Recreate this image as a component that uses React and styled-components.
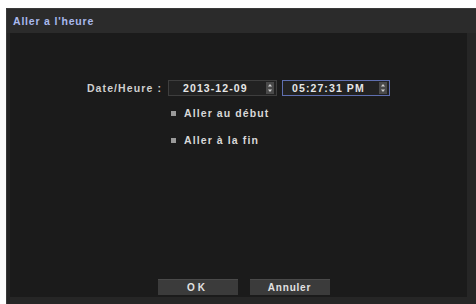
import React from "react";
import styled, { createGlobalStyle } from "styled-components";

const Global = createGlobalStyle`
  html, body {
    margin: 0;
    padding: 0;
    background: #ffffff;
    width: 476px;
    height: 304px;
    overflow: hidden;
  }
  body {
    font-family: "Liberation Sans", Arial, sans-serif;
  }
`;

const Page = styled.div`
  width: 476px;
  height: 304px;
  padding: 8px 0 0 6px;
  box-sizing: border-box;
  display: flex;
`;

const Dialog = styled.div`
  flex: 1;
  display: flex;
  flex-direction: column;
  background: #262626;
  border-left: 1px solid #3a3a3a;
  border-top: 1px solid #3a3a3a;
`;

const TitleBar = styled.div`
  height: 24px;
  display: flex;
  align-items: center;
  padding-left: 6px;
  background: #2b2b2b;
  color: #a9b9ee;
  font-size: 10.5px;
  font-weight: bold;
  letter-spacing: 0.8px;
`;

const Panel = styled.div`
  flex: 1;
  margin: 0 9px 7px 3px;
  background: #1b1b1b;
  display: flex;
  flex-direction: column;
  align-items: flex-start;
  padding-top: 47px;
  color: #dcdcdc;
  font-size: 10.5px;
  font-weight: bold;
  letter-spacing: 1.1px;
`;

const Row = styled.div`
  display: flex;
  align-items: center;
  height: 16px;
`;

const Label = styled.div`
  width: 158px;
  text-align: right;
  padding-right: 6px;
  box-sizing: border-box;
  color: #cfcfcf;
  white-space: nowrap;
`;

const Field = styled.div`
  width: ${p => p.w}px;
  height: 16px;
  box-sizing: border-box;
  display: flex;
  align-items: center;
  background: #222;
  border: 1px solid ${p => (p.active ? "#5f6fb0" : "#3e3e3e")};
  margin-right: 5px;
`;

const Value = styled.div`
  flex: 1;
  padding-left: ${p => p.pl}px;
  color: #e6e6e6;
  white-space: nowrap;
`;

const Spinner = styled.div`
  width: 8px;
  height: 12px;
  margin-right: 2px;
  background: #4a4a4a;
  display: flex;
  align-items: center;
  justify-content: center;
`;

const Option = styled.div`
  display: flex;
  align-items: center;
  height: 14px;
  margin-left: 161px;
  margin-top: ${p => p.mt}px;
  color: #d8d8d8;
`;

const Box = styled.span`
  width: 5px;
  height: 5px;
  background: #9a9a9a;
  margin-right: 8px;
`;

const Buttons = styled.div`
  margin-top: auto;
  margin-bottom: 2px;
  align-self: stretch;
  display: flex;
  justify-content: center;
  gap: 12px;
  padding-left: 10px;
`;

const Button = styled.div`
  width: 80px;
  height: 16px;
  background: #3b3b3b;
  border-top: 1px solid #4a4a4a;
  box-sizing: border-box;
  display: flex;
  align-items: center;
  justify-content: center;
  color: #e2e2e2;
  font-size: 10px;
  letter-spacing: ${p => (p.wide ? "3px" : "0.8px")};
`;

const SpinIcon = () => (
  <svg width="6" height="10" viewBox="0 0 6 10">
    <path d="M3 1 L5 3.5 H1 Z" fill="#d0d0d0" />
    <path d="M3 9 L5 6.5 H1 Z" fill="#d0d0d0" />
  </svg>
);

export default function App() {
  return (
    <>
      <Global />
      <Page>
        <Dialog>
          <TitleBar>Aller a l'heure</TitleBar>
          <Panel>
            <Row>
              <Label>Date/Heure :</Label>
              <Field w={109}>
                <Value pl={14}>2013-12-09</Value>
                <Spinner>
                  <SpinIcon />
                </Spinner>
              </Field>
              <Field w={108} active>
                <Value pl={9}>05:27:31 PM</Value>
                <Spinner>
                  <SpinIcon />
                </Spinner>
              </Field>
            </Row>
            <Option mt={10}>
              <Box />
              Aller au début
            </Option>
            <Option mt={13}>
              <Box />
              Aller à la fin
            </Option>
            <Buttons>
              <Button wide>OK</Button>
              <Button>Annuler</Button>
            </Buttons>
          </Panel>
        </Dialog>
      </Page>
    </>
  );
}
